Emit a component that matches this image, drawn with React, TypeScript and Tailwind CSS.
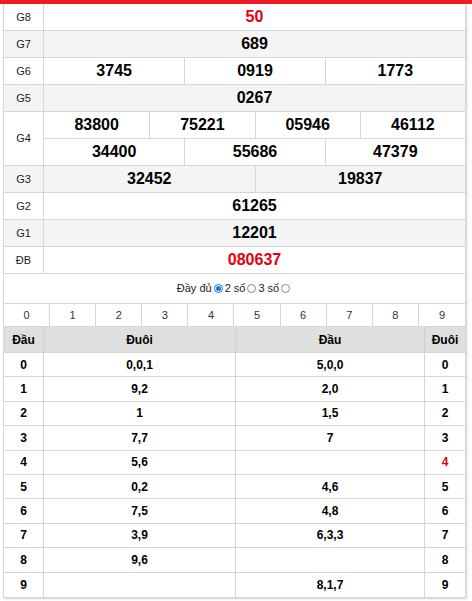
import React from "react";

type Prize = { label: string; rows: string[][]; red?: boolean; alt?: boolean };

const prizes: Prize[] = [
  { label: "G8", rows: [["50"]], red: true },
  { label: "G7", rows: [["689"]], alt: true },
  { label: "G6", rows: [["3745", "0919", "1773"]] },
  { label: "G5", rows: [["0267"]], alt: true },
  { label: "G4", rows: [["83800", "75221", "05946", "46112"], ["34400", "55686", "47379"]] },
  { label: "G3", rows: [["32452", "19837"]], alt: true },
  { label: "G2", rows: [["61265"]] },
  { label: "G1", rows: [["12201"]], alt: true },
  { label: "ĐB", rows: [["080637"]], red: true },
];

// [đầu, đuôi list, đầu list, red right digit]
const loto: [string, string, string, boolean][] = [
  ["0", "0,0,1", "5,0,0", false],
  ["1", "9,2", "2,0", false],
  ["2", "1", "1,5", false],
  ["3", "7,7", "7", false],
  ["4", "5,6", "", true],
  ["5", "0,2", "4,6", false],
  ["6", "7,5", "4,8", false],
  ["7", "3,9", "6,3,3", false],
  ["8", "9,6", "", false],
  ["9", "", "8,1,7", false],
];

const gridCols: Record<number, string> = {
  1: "grid-cols-1",
  2: "grid-cols-2",
  3: "grid-cols-3",
  4: "grid-cols-4",
};

function PrizeRow({ p }: { p: Prize }) {
  return (
    <div className={`grid grid-cols-[40px_1fr] border-b border-[#d6d6d6] ${p.alt ? "bg-[#f4f4f4]" : "bg-white"}`}>
      <div className="flex items-center justify-center border-r border-[#d6d6d6] text-[11px] text-[#222]">
        {p.label}
      </div>
      <div className="flex flex-col">
        {p.rows.map((r, i) => (
          <div
            key={i}
            className={`grid ${gridCols[r.length]} ${i < p.rows.length - 1 ? "h-[27px] border-b border-[#d6d6d6]" : "h-[26px]"}`}
          >
            {r.map((n, j) => (
              <div
                key={j}
                className={`flex items-center justify-center text-[16px] font-bold ${j > 0 ? "border-l border-[#d6d6d6]" : ""} ${p.red ? "text-[#e3000f]" : "text-black"}`}
              >
                {n}
              </div>
            ))}
          </div>
        ))}
      </div>
    </div>
  );
}

function Radio({ checked }: { checked?: boolean }) {
  return checked ? (
    <span className="mx-[2px] inline-flex h-[9px] w-[9px] items-center justify-center rounded-full border border-[#1a73e8] bg-white">
      <span className="h-[5px] w-[5px] rounded-full bg-[#1a73e8]" />
    </span>
  ) : (
    <span className="mx-[2px] inline-block h-[9px] w-[9px] rounded-full border border-[#8a8a8a] bg-white" />
  );
}

export default function App() {
  return (
    <div className="w-[472px] min-h-[601px] bg-white font-['Liberation_Sans',Arial,sans-serif] text-black">
      <div className="h-[4px] bg-[#ee1c25]" />
      <div className="ml-[3px] w-[463px] border-x border-b border-[#d6d6d6] shadow-[1px_1px_2px_rgba(0,0,0,0.18)]">
        {prizes.map((p) => (
          <PrizeRow key={p.label} p={p} />
        ))}

        {/* display options */}
        <div className="flex h-[30px] items-center justify-center border-b border-[#d6d6d6] text-[11px] text-[#222]">
          <span>Đầy đủ</span>
          <Radio checked />
          <span>2 số</span>
          <Radio />
          <span>3 số</span>
          <Radio />
        </div>

        {/* digit filter */}
        <div className="grid h-[23px] grid-cols-10 border-b border-[#d6d6d6] text-[11px] text-[#333]">
          {["0", "1", "2", "3", "4", "5", "6", "7", "8", "9"].map((d, i) => (
            <div key={d} className={`flex items-center justify-center ${i < 9 ? "border-r border-[#d6d6d6]" : ""}`}>
              {d}
            </div>
          ))}
        </div>

        {/* loto table */}
        <div className="grid h-[26px] grid-cols-[40px_192px_1fr_40px] border-b border-[#d6d6d6] bg-[#dfdfdf] text-[12px] font-bold">
          <div className="flex items-center justify-center border-r border-[#d0d0d0]">Đầu</div>
          <div className="flex items-center justify-center border-r border-[#d0d0d0]">Đuôi</div>
          <div className="flex items-center justify-center border-r border-[#d0d0d0]">Đầu</div>
          <div className="flex items-center justify-center">Đuôi</div>
        </div>
        {loto.map(([d, tails, heads, red], i) => (
          <div
            key={d}
            className={`grid h-[24.4px] grid-cols-[40px_192px_1fr_40px] text-[12px] font-bold ${i < loto.length - 1 ? "border-b border-[#d6d6d6]" : ""}`}
          >
            <div className="flex items-center justify-center border-r border-[#d6d6d6]">{d}</div>
            <div className="flex items-center justify-center border-r border-[#d6d6d6]">{tails}</div>
            <div className="flex items-center justify-center border-r border-[#d6d6d6]">{heads}</div>
            <div className={`flex items-center justify-center ${red ? "text-[#e3000f]" : ""}`}>{d}</div>
          </div>
        ))}
      </div>
    </div>
  );
}
